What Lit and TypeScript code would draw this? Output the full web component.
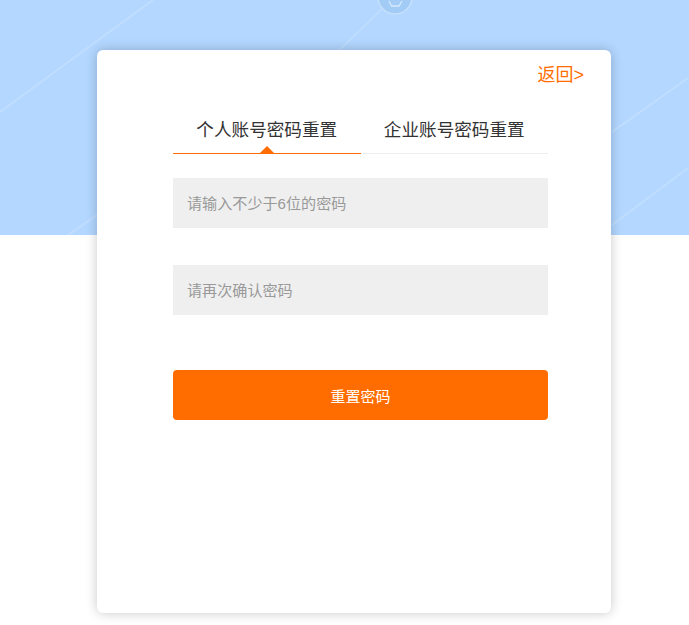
import { LitElement, html, css, svg } from "lit";
import { customElement, state } from "lit/decorators.js";

@customElement("app-root")
export class AppRoot extends LitElement {
  @state() private tab = 0;

  static styles = css`
    :host {
      display: block;
      height: 625px;
      overflow: hidden;
      background: #fff;
      font-family: "Liberation Sans", "Noto Sans CJK SC", sans-serif;
      color: #333;
    }
    .hero {
      position: relative;
      height: 235px;
      background: #b3d7ff;
      padding: 50px 0 0 97px;
      box-sizing: border-box;
    }
    .deco {
      position: absolute;
      inset: 0;
      width: 689px;
      height: 235px;
    }
    .card {
      position: relative;
      width: 514px;
      height: 563px;
      box-sizing: border-box;
      background: #fff;
      border-radius: 6px;
      box-shadow: 0 0 12px rgba(0, 0, 0, 0.22);
      padding: 13px 27px 0 76px;
    }
    .back {
      display: block;
      text-align: right;
      font-size: 18px;
      line-height: 24px;
      color: #ff6d00;
      text-decoration: none;
    }
    .tabs {
      display: flex;
      width: 375px;
      margin-top: 30px;
    }
    .tab {
      position: relative;
      flex: 1;
      height: 24px;
      padding: 1px 0 11px;
      border: 0;
      border-bottom: 1px solid #eee;
      background: none;
      font: inherit;
      font-size: 17.6px;
      line-height: 24px;
      color: #333;
      text-align: center;
      box-sizing: content-box;
      cursor: pointer;
    }
    .tab.on {
      border-bottom-color: #ff6d00;
    }
    .tab.on::after {
      content: "";
      position: absolute;
      left: 50%;
      bottom: 0;
      margin-left: -7px;
      border: 7px solid transparent;
      border-top: 0;
      border-bottom-color: #ff6d00;
    }
    form {
      display: flex;
      flex-direction: column;
      width: 375px;
      margin-top: 24px;
    }
    input {
      height: 50px;
      box-sizing: border-box;
      border: 0;
      outline: 0;
      padding: 0 14px;
      margin-bottom: 37px;
      background: #efefef;
      font: inherit;
      font-size: 15.1px;
      color: #333;
    }
    input::placeholder {
      color: #999;
      opacity: 1;
    }
    .submit {
      height: 50px;
      margin-top: 18px;
      border: 0;
      border-radius: 4px;
      background: #ff6d00;
      color: #fff;
      font: inherit;
      font-size: 15px;
      cursor: pointer;
    }
  `;

  private deco() {
    const lines = [
      [153, 0, 0, 112],
      [382, 9, 323, 66],
      [688, 78, 612, 132],
      [688, 168, 612, 225],
      [97, 215, 68, 235],
    ];
    return svg`<svg class="deco" viewBox="0 0 689 235" aria-hidden="true">
      <defs><filter id="soft"><feGaussianBlur stdDeviation="0.7"></feGaussianBlur></filter></defs>
      <g filter="url(#soft)">
      ${lines.map(
        ([a, b, c, d]) =>
          svg`<line x1=${a} y1=${b} x2=${c} y2=${d} stroke="#c1deff" stroke-width="1.6"></line>`
      )}
      <circle cx="395" cy="-3" r="17" fill="#a2cbf5" stroke="#c6e0fb" stroke-width="1.5"></circle>
      <path d="M389 1l2.5 5h7.5l3-5" fill="none" stroke="#d6e9fd" stroke-width="1.3"></path>
      </g>
    </svg>`;
  }

  render() {
    return html`
      <div class="hero">
        ${this.deco()}
        <div class="card">
          <a class="back" href="#">返回&gt;</a>
          <div class="tabs">
            ${["个人账号密码重置", "企业账号密码重置"].map(
              (t, i) => html`<button
                class="tab ${this.tab === i ? "on" : ""}"
                @click=${() => (this.tab = i)}
              >${t}</button>`
            )}
          </div>
          <form @submit=${(e: Event) => e.preventDefault()}>
            <input type="password" placeholder="请输入不少于6位的密码" />
            <input type="password" placeholder="请再次确认密码" />
            <button class="submit">重置密码</button>
          </form>
        </div>
      </div>
    `;
  }
}
